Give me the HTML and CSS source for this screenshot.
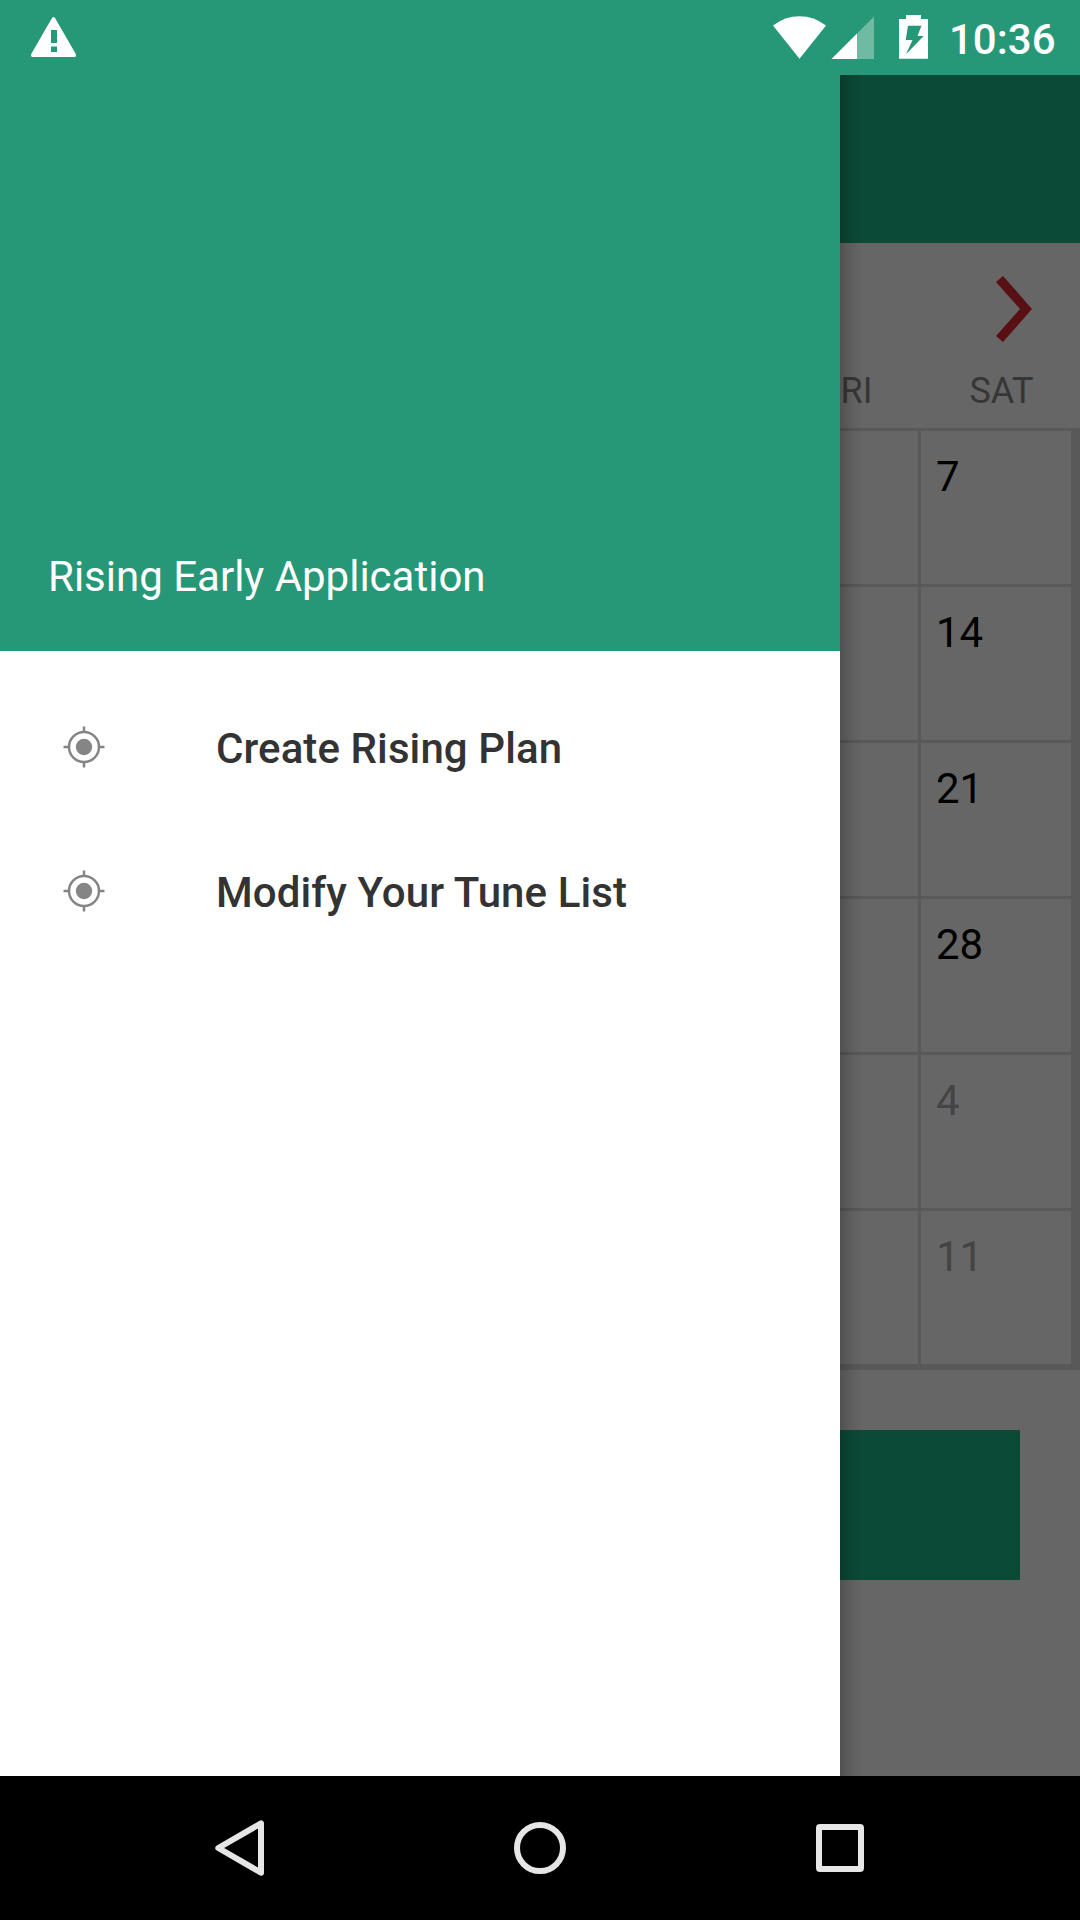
FILE: index.html
```html
<!DOCTYPE html>
<html lang="en">
<head>
<meta charset="utf-8">
<title>Rising Early Application</title>
<link rel="stylesheet" href="styles.css">
</head>
<body>
<div class="screen">
  <header class="status-bar">
    <svg class="icon-warning" width="46" height="42" viewBox="30 16 46 42"><path fill="#fff" fill-rule="evenodd" d="M52 18Q53.500 16 55 18L75.500 53.500Q77 57 74 57H33Q30 57 31.500 53.500ZM51 30V43H57V30ZM51 46.500V52H57V46.500Z"/></svg>
    <div class="status-icons">
      <svg class="icon-wifi" width="54" height="44" viewBox="773 16 54 44"><path fill="#fff" d="M799.500 58.700L773 25.500Q785 16.200 799.500 16.200T826 25.500Z"/></svg>
      <svg class="icon-signal" width="44" height="44" viewBox="831 16 44 44"><path fill="#fff" opacity=".33" d="M874 16.500V59H857V33.500Z"/><path fill="#fff" d="M857 33.500V59H831.500Z"/></svg>
      <svg class="icon-battery" width="30" height="44" viewBox="899 15 30 44"><path fill="#fff" fill-rule="evenodd" d="M906 15H921V19H928V58.700H899V19H906ZM908 25.700L905.700 40H912.500L906 54.200L923.700 36H917.500L921.500 25.700Z"/></svg>
      <span class="clock">10:36</span>
    </div>
  </header>

  <main class="content">
    <div class="app-bar"></div>
    <div class="month-bar">
      <svg width="36" height="66" viewBox="0 0 36 66"><path fill="#591014" d="M0 6L7 0L36 33L7 66L0 60L24 33Z"/></svg>
    </div>
    <div class="weekdays"><span class="fri">FRI</span><span class="sat">SAT</span></div>
    <div class="calendar">
      <div class="week"><div class="day"></div><div class="day">7</div></div>
      <div class="week"><div class="day"></div><div class="day">14</div></div>
      <div class="week"><div class="day"></div><div class="day">21</div></div>
      <div class="week"><div class="day"></div><div class="day">28</div></div>
      <div class="week"><div class="day"></div><div class="day other">4</div></div>
      <div class="week"><div class="day"></div><div class="day other">11</div></div>
    </div>
    <div class="action"></div>

    <aside class="drawer">
      <div class="drawer-header">Rising Early Application</div>
      <nav class="menu">
        <div class="menu-item">
          <svg width="42" height="42" viewBox="-21 -21 42 42"><circle r="8.200" fill="#858585"/><path fill="none" stroke="#858585" stroke-width="2.500" d="M0-20.500V-15M0 20.500V15M-20.500 0H-15M20.500 0H15"/><circle r="15" fill="none" stroke="#858585" stroke-width="2.500"/></svg>
          <span>Create Rising Plan</span>
        </div>
        <div class="menu-item">
          <svg width="42" height="42" viewBox="-21 -21 42 42"><circle r="8.200" fill="#858585"/><path fill="none" stroke="#858585" stroke-width="2.500" d="M0-20.500V-15M0 20.500V15M-20.500 0H-15M20.500 0H15"/><circle r="15" fill="none" stroke="#858585" stroke-width="2.500"/></svg>
          <span>Modify Your Tune List</span>
        </div>
      </nav>
    </aside>
  </main>

  <footer class="nav-bar">
    <svg width="60" height="60" viewBox="210 1818 60 60"><path fill="none" stroke="#e6e6e6" stroke-width="6" stroke-linejoin="round" d="M261 1823.300V1872.700L218.300 1848Z"/></svg>
    <svg width="60" height="60" viewBox="-30 -30 60 60"><circle r="23" fill="none" stroke="#e6e6e6" stroke-width="6"/></svg>
    <svg width="60" height="60" viewBox="-30 -30 60 60"><path fill="#e6e6e6" fill-rule="evenodd" d="M-20-24H20Q24-24 24-20V20Q24 24 20 24H-20Q-24 24-24 20V-20Q-24-24-20-24ZM-18-18V18H18V-18Z"/></svg>
  </footer>
</div>
</body>
</html>
```
FILE: styles.css
```css
body {
  margin: 0;
  font-family: Roboto, sans-serif;
}

svg {
  display: block;
  flex: none;
}

.screen {
  width: 1080px;
  height: 1920px;
  display: flex;
  flex-direction: column;
  overflow: hidden;
}

.status-bar {
  height: 75px;
  flex: none;
  box-sizing: border-box;
  display: flex;
  justify-content: space-between;
  align-items: flex-start;
  padding: 15px 24px 0 30px;
  background: #279877;
  color: #fff;
}

.icon-warning,
.icon-wifi,
.icon-signal {
  margin-top: 1px;
}

.status-icons {
  display: flex;
  align-items: flex-start;
}

.icon-signal {
  margin-left: 4px;
}

.icon-battery {
  margin-left: 24px;
}

.clock {
  width: 107px;
  margin-left: 20px;
  font-size: 42px;
  font-weight: 500;
  line-height: 50px;
}

.content {
  position: relative;
  height: 1701px;
  background: #666;
}

.app-bar {
  height: 168px;
  background: #0b4a36;
}

.month-bar {
  display: flex;
  justify-content: flex-end;
  padding: 33px 48px 0 0;
}

.weekdays {
  display: grid;
  grid-template-columns: repeat(7, 1fr);
  margin-top: 27px;
  padding-right: 2px;
  height: 59px;
  color: #363636;
  font-size: 36px;
  line-height: 44px;
  text-align: center;
}

.fri {
  grid-column: 6;
  padding-right: 1px;
}

.sat {
  grid-column: 7;
  padding-left: 1px;
}

.calendar {
  display: flex;
  flex-direction: column;
  gap: 3px;
  padding: 3px 9px 6px 0;
  background: #595959;
}

.week {
  display: flex;
  justify-content: flex-end;
  gap: 3px;
}

.day {
  box-sizing: border-box;
  width: 150px;
  height: 153px;
  padding: 22px 0 0 15px;
  background: #666;
  color: #000;
  font-size: 42px;
  line-height: 48px;
}

.other {
  color: #444;
}

.action {
  height: 150px;
  margin: 60px 60px 0;
  background: #0b4a36;
}

/* Open navigation drawer, covering the calendar */
.drawer {
  position: absolute;
  top: 0;
  bottom: 0;
  left: 0;
  width: 840px;
  background: #fff;
}

.drawer::after {
  content: "";
  position: absolute;
  top: 0;
  bottom: 0;
  left: 100%;
  width: 24px;
  background: linear-gradient(to right, rgba(0, 0, 0, .21), rgba(0, 0, 0, .07) 50%, transparent);
}

.drawer-header {
  box-sizing: border-box;
  height: 576px;
  display: flex;
  align-items: flex-end;
  padding: 0 48px 50px;
  background: #279877;
  color: #fff;
  font-size: 42px;
  line-height: 48px;
}

.menu {
  padding-top: 24px;
}

.menu-item {
  height: 144px;
  display: flex;
  align-items: center;
  gap: 111px;
  padding-left: 63px;
  color: #333;
  font-size: 42px;
  font-weight: 500;
  letter-spacing: .09px;
}

.menu-item span {
  padding-top: 3px;
}

.nav-bar {
  height: 144px;
  display: flex;
  align-items: center;
  justify-content: center;
  gap: 240px;
  background: #000;
}
```
